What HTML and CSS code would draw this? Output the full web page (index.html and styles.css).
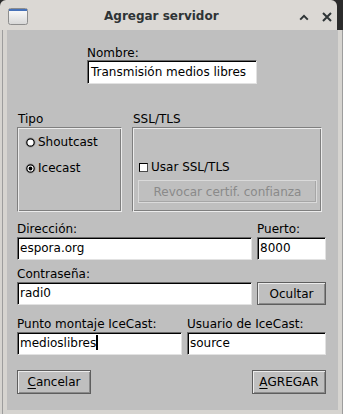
FILE: index.html
```html
<!DOCTYPE html>
<html lang="es">
<head>
<meta charset="utf-8">
<title>Agregar servidor</title>
<link rel="stylesheet" href="styles.css">
</head>
<body>
<div class="window">
  <div class="titlerow">
    <div class="titlebar">
      <svg class="app-icon" width="20" height="17" viewBox="0 0 20 17">
        <defs>
          <linearGradient id="ig" x1="0" y1="0" x2="0" y2="1">
            <stop offset="0" stop-color="#ffffff"/>
            <stop offset="1" stop-color="#d6d6d6"/>
          </linearGradient>
        </defs>
        <rect x="0.5" y="0.5" width="19" height="16" rx="2" fill="url(#ig)" stroke="#8d8d8d"/>
        <rect x="1" y="1" width="18" height="2" fill="#4671b8"/>
      </svg>
      <span class="title">Agregar servidor</span>
      <div class="wm-buttons">
        <svg width="10" height="10" viewBox="0 0 10 10"><path d="M1.2 7.6 L5 3.8 L8.8 7.6" fill="none" stroke="#2e3436" stroke-width="2"/></svg>
        <svg class="wm-close" width="10" height="10" viewBox="0 0 10 10"><path d="M1 1 L9 9 M9 1 L1 9" fill="none" stroke="#2e3436" stroke-width="2"/></svg>
      </div>
    </div>
  </div>
  <div class="frame">
    <div class="content">
      <div class="name-block">
        <div class="label">Nombre:</div>
        <div class="entry entry-name">Transmisión medios libres</div>
      </div>

      <div class="groups">
        <div class="group">
          <div class="label group-label">Tipo</div>
          <div class="groupbox tipo-box">
            <div class="radio-row">
              <svg class="radio" width="11" height="11" viewBox="0 0 11 11"><circle cx="5.5" cy="5.5" r="4.6" fill="none" stroke="#9a9a9a" stroke-width="1"/><circle cx="5.5" cy="5.5" r="3.7" fill="#fff" stroke="#000" stroke-width="1.2"/></svg>Shoutcast
            </div>
            <div class="radio-row">
              <svg class="radio" width="11" height="11" viewBox="0 0 11 11"><circle cx="5.5" cy="5.5" r="4.6" fill="none" stroke="#9a9a9a" stroke-width="1"/><circle cx="5.5" cy="5.5" r="3.7" fill="#fff" stroke="#000" stroke-width="1.2"/><circle cx="5.5" cy="5.5" r="1.9" fill="#000"/></svg>Icecast
            </div>
          </div>
        </div>
        <div class="group">
          <div class="label group-label">SSL/TLS</div>
          <div class="groupbox ssl-box">
            <div class="check-row"><span class="checkbox"></span>Usar SSL/TLS</div>
            <div class="button button-disabled">Revocar certif. confianza</div>
          </div>
        </div>
      </div>

      <div class="field-row row-addr">
        <div class="label">Dirección:</div>
        <div class="label">Puerto:</div>
        <div class="entry">espora.org</div>
        <div class="entry">8000</div>
      </div>

      <div class="field-row row-pass">
        <div class="label">Contraseña:</div>
        <div class="label"></div>
        <div class="entry">radi0</div>
        <div class="button">Ocultar</div>
      </div>

      <div class="field-row row-mount">
        <div class="label">Punto montaje IceCast:</div>
        <div class="label">Usuario de IceCast:</div>
        <div class="entry">medioslibres<span class="cursor"></span></div>
        <div class="entry">source</div>
      </div>

      <div class="actions">
        <div class="button action"><u>C</u>ancelar</div>
        <div class="button action"><u>A</u>GREGAR</div>
      </div>
    </div>
  </div>
</div>
</body>
</html>
```

FILE: styles.css
```css
* {
  box-sizing: border-box;
}

html, body {
  margin: 0;
  padding: 0;
}

body {
  width: 343px;
  height: 414px;
  overflow: hidden;
  background: #2b2b2b;
  font-family: "DejaVu Sans", "Noto Sans", sans-serif;
  font-size: 12px;
  color: #000;
}

.window {
  width: 343px;
  height: 414px;
  display: flex;
  flex-direction: column;
}

.titlerow {
  height: 30px;
  display: flex;
}

.titlebar {
  width: 337px;
  height: 30px;
  background: #dbd8d4;
  border-radius: 6px 6px 0 0;
  display: flex;
  align-items: flex-start;
}

.app-icon {
  margin-left: 8px;
  margin-top: 8px;
  flex: none;
}

.title {
  margin-left: 76px;
  margin-top: 9px;
  font-weight: bold;
  font-size: 12px;
  line-height: 14px;
  color: #2e3436;
  white-space: nowrap;
}

.wm-buttons {
  margin-left: auto;
  margin-right: 5px;
  margin-top: 12px;
  display: flex;
  gap: 13px;
}

.wm-buttons svg {
  display: block;
}

.frame {
  height: 384px;
  padding: 0 5px 4px 7px;
  background: linear-gradient(to right, #d6d4d0 0 2px, #9d9d9d 2px 3px, #d6d4d0 3px 342px, #9d9d9d 342px 343px);
}

.content {
  width: 331px;
  height: 380px;
  background: #bfbfbf;
  padding: 16px 12px 16px 10px;
  display: flex;
  flex-direction: column;
}

.label {
  line-height: 14px;
  height: 14px;
  white-space: nowrap;
}

.entry {
  height: 23px;
  background: #fff;
  border: 1px solid;
  border-color: #6a6a6a #e2e2e2 #e2e2e2 #6a6a6a;
  box-shadow: inset 1px 1px 0 #000;
  padding-left: 2px;
  line-height: 21px;
  white-space: nowrap;
  overflow: hidden;
}

.name-block {
  margin-left: 70px;
  width: 170px;
}

.entry-name {
  height: 24px;
  line-height: 22px;
  padding-left: 3px;
}

.groups {
  margin-top: 28px;
  display: flex;
  gap: 10px;
}

.group-label {
  padding-left: 1px;
  margin-bottom: 1px;
}

.groupbox {
  height: 85px;
  border: 1px solid;
  border-color: #7f7f7f #ececec #ececec #7f7f7f;
  box-shadow: inset 1px 1px 0 #ececec, inset -1px -1px 0 #7f7f7f;
}

.tipo-box {
  width: 105px;
  padding: 7px 0 0 7px;
  display: flex;
  flex-direction: column;
  gap: 12px;
}

.radio-row {
  display: flex;
  align-items: center;
  height: 14px;
  line-height: 14px;
}

.radio {
  display: block;
  flex: none;
  margin-right: 2px;
}

.ssl-box {
  width: 190px;
  padding: 0 4px 8px 5px;
  display: flex;
  flex-direction: column;
  justify-content: flex-end;
}

.check-row {
  display: flex;
  align-items: center;
  height: 14px;
  line-height: 14px;
  margin-bottom: 6px;
}

.checkbox {
  width: 9px;
  height: 9px;
  margin-left: 1px;
  margin-right: 3px;
  background: #fff;
  border: 1px solid #000;
  border-right-color: #4a4a4a;
  border-bottom-color: #4a4a4a;
  flex: none;
}

.button {
  height: 23px;
  border: 1px solid #5e5e5e;
  box-shadow: inset 1px 1px 0 #ececec, inset -1px -1px 0 #8a8a8a;
  background: #bfbfbf;
  display: flex;
  align-items: center;
  justify-content: center;
  white-space: nowrap;
}

.button-disabled {
  color: #8a8a8a;
  border-color: #dadada;
  box-shadow: inset -1px -1px 0 #a6a6a6;
}

.field-row {
  display: grid;
  grid-template-columns: 235px 69px;
  column-gap: 5px;
  row-gap: 1px;
}

.row-addr {
  margin-top: 10px;
}

.row-pass {
  margin-top: 7px;
}

.row-mount {
  margin-top: 12px;
  grid-template-columns: 165px 139px;
}

.cursor {
  display: inline-block;
  width: 2px;
  height: 15px;
  background: #000;
  vertical-align: -3px;
}

.actions {
  margin-top: 15px;
  display: flex;
  justify-content: space-between;
}

.action {
  width: 74px;
  height: 24px;
}

.action u {
  text-underline-offset: 2px;
}
```
